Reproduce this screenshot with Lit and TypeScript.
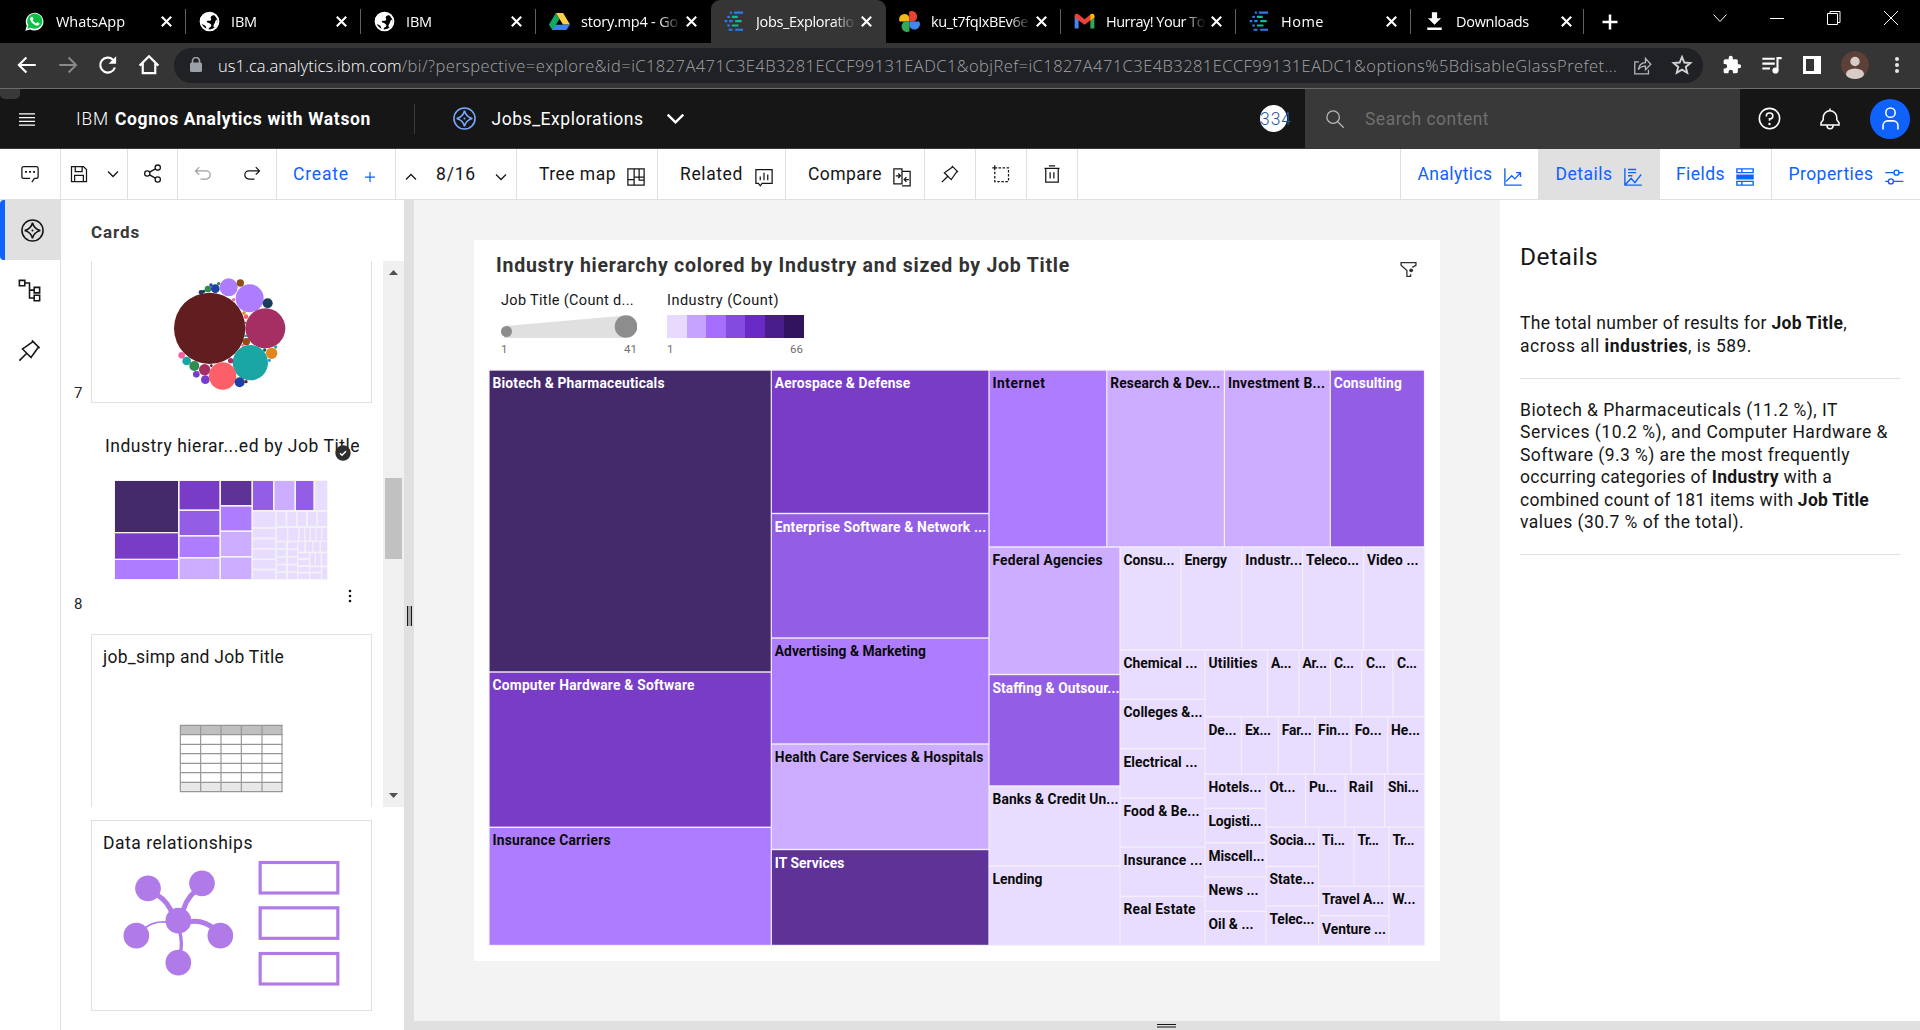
import { LitElement, html, svg, css } from "lit";
import { customElement, property } from "lit/decorators.js";

/** Inline text whose tracking is adjusted so that it spans a given width. */
@customElement("fit-text")
class FitText extends LitElement {
  @property({ type: Number }) w = 0;
  static styles = css`
    :host { display: inline-block; white-space: pre; flex: none; }
  `;
  firstUpdated() {
    const natural = this.getBoundingClientRect().width;
    const count = (this.textContent || "").length;
    if (this.w && count) this.style.letterSpacing = `${(this.w - natural) / count}px`;
  }
  render() { return html`<slot></slot>`; }
}

type Tile = [number, number, number, number, number, string, number, number?];
const SHADES = ["#e8ddff", "#ccadff", "#ae7dff", "#935ee5", "#783cc6", "#5f3298", "#452a6b"];
// x0, y0, x1, y1, shade, label, label width, label x
const TILES: Tile[] = [
  [489, 370, 771.3, 672, 6, "Biotech & Pharmaceuticals", 172],
  [489, 672, 771.3, 827.3, 4, "Computer Hardware & Software", 202],
  [489, 827.3, 771.3, 945.5, 2, "Insurance Carriers", 118],
  [771.3, 370, 989, 513.5, 4, "Aerospace & Defense", 135.5],
  [771.3, 513.5, 989, 638, 3, "Enterprise Software & Network ...", 211.5],
  [771.3, 638, 989, 744, 2, "Advertising & Marketing", 151],
  [771.3, 744, 989, 849.5, 1, "Health Care Services & Hospitals", 208.5],
  [771.3, 849.5, 989, 945.5, 5, "IT Services", 69.5],
  [989, 370, 1106.8, 547, 2, "Internet", 52.5],
  [1106.8, 370, 1224.4, 547, 1, "Research & Dev...", 110],
  [1224.4, 370, 1330.3, 547, 1, "Investment B...", 97],
  [1330.3, 370, 1424.5, 547, 3, "Consulting", 68],
  [989, 547, 1120, 674.5, 1, "Federal Agencies", 110],
  [989, 674.5, 1120, 786, 3, "Staffing & Outsour...", 127],
  [989, 786, 1120, 866, 0, "Banks & Credit Un...", 126],
  [989, 866, 1120, 945.5, 0, "Lending", 50],
  [1120, 547, 1181, 650, 0, "Consu...", 51],
  [1181, 547, 1241.8, 650, 0, "Energy", 42.5],
  [1241.8, 547, 1302.6, 650, 0, "Industr...", 57],
  [1302.6, 547, 1363.5, 650, 0, "Teleco...", 53],
  [1363.5, 547, 1424.5, 650, 0, "Video ...", 51.5],
  [1120, 650, 1205, 699.3, 0, "Chemical ...", 74],
  [1120, 699.3, 1205, 748.6, 0, "Colleges &...", 79],
  [1120, 748.6, 1205, 798, 0, "Electrical ...", 74],
  [1120, 798, 1205, 847, 0, "Food & Be...", 76],
  [1120, 847, 1205, 896.3, 0, "Insurance ...", 79],
  [1120, 896.3, 1205, 945.5, 0, "Real Estate", 72],
  [1205, 650, 1267.5, 716.7, 0, "Utilities", 49],
  [1267.5, 650, 1299, 716.7, 0, "A...", 20.5],
  [1299, 650, 1330.4, 716.7, 0, "Ar...", 24.5],
  [1330.4, 650, 1361.6, 716.7, 0, "C...", 20],
  [1361.6, 650, 1392.8, 716.7, 0, "C...", 20, 1366],
  [1392.8, 650, 1424.5, 716.7, 0, "C...", 20, 1397],
  [1205, 716.7, 1241.5, 774, 0, "De...", 28],
  [1241.5, 716.7, 1278.3, 774, 0, "Ex...", 26],
  [1278.3, 716.7, 1314.6, 774, 0, "Far...", 30],
  [1314.6, 716.7, 1351.2, 774, 0, "Fin...", 31],
  [1351.2, 716.7, 1387.6, 774, 0, "Fo...", 27],
  [1387.6, 716.7, 1424.5, 774, 0, "He...", 29],
  [1205, 774, 1266, 808.4, 0, "Hotels...", 53],
  [1205, 808.4, 1266, 842.6, 0, "Logisti...", 53],
  [1205, 842.6, 1266, 877, 0, "Miscell...", 56],
  [1205, 877, 1266, 911.3, 0, "News ...", 50],
  [1205, 911.3, 1266, 945.5, 0, "Oil & ...", 45],
  [1266, 774, 1305.6, 827, 0, "Ot...", 26],
  [1305.6, 774, 1345.2, 827, 0, "Pu...", 28],
  [1345.2, 774, 1384.6, 827, 0, "Rail", 24.5],
  [1384.6, 774, 1424.5, 827, 0, "Shi...", 31],
  [1266, 827, 1318.6, 866.4, 0, "Socia...", 46],
  [1266, 866.4, 1318.6, 906, 0, "State...", 45],
  [1266, 906, 1318.6, 945.5, 0, "Telec...", 45],
  [1318.6, 827, 1354, 886.3, 0, "Ti...", 23],
  [1354, 827, 1389, 886.3, 0, "Tr...", 21.5],
  [1389, 827, 1424.5, 886.3, 0, "Tr...", 22],
  [1318.6, 886.3, 1389, 915.7, 0, "Travel A...", 62],
  [1318.6, 915.7, 1389, 945.5, 0, "Venture ...", 64],
  [1389, 886.3, 1424.5, 945.5, 0, "W...", 23],
];

// x0, y0, x1, y1, shade
const MINI: number[][] = [
  [345, 843, 534, 996, 6], [345, 1000, 534, 1076, 4], [345, 1080, 534, 1137, 2],
  [539, 843, 658, 928, 4], [539, 933, 658, 1005, 3], [539, 1010, 658, 1071, 2], [539, 1076, 658, 1137, 1],
  [663, 843, 754, 915, 5], [663, 920, 754, 991, 2], [663, 996, 754, 1068, 1], [663, 1073, 754, 1137, 1],
  [759, 843, 819, 930, 3], [824, 843, 883, 930, 1], [888, 843, 940, 930, 3], [946, 843, 981, 930, 0],
  [759, 935, 826, 981, 0], [759, 987, 826, 1013, 0], [759, 1018, 826, 1044, 0], [759, 1049, 826, 1075, 0],
  [759, 1080, 826, 1106, 0], [759, 1111, 826, 1137, 0],
  [831, 936, 857, 978, 0], [862, 936, 888, 978, 0], [893, 936, 918, 978, 0], [924, 936, 949, 978, 0], [954, 936, 981, 978, 0],
  [831, 984, 861, 1022, 0], [865, 984, 894, 1022, 0], [899, 984, 912, 1022, 0], [916, 984, 929, 1022, 0],
  [933, 984, 946, 1022, 0], [950, 984, 963, 1022, 0], [967, 984, 981, 1022, 0],
  ...[1027, 1050, 1073, 1096, 1119].flatMap((y) => [[831, y, 858, y + 18, 0], [864, y, 891, y + 18, 0]]),
  [895, 1026, 913, 1055, 0], [918, 1026, 936, 1055, 0], [940, 1026, 958, 1055, 0], [963, 1026, 981, 1055, 0],
  [895, 1060, 927, 1074, 0], [895, 1080, 927, 1095, 0], [895, 1101, 927, 1115, 0], [895, 1121, 927, 1137, 0],
  [931, 1060, 944, 1096, 0], [948, 1060, 962, 1096, 0], [967, 1060, 981, 1096, 0],
  [931, 1102, 963, 1115, 0], [931, 1121, 963, 1137, 0], [967, 1102, 981, 1137, 0],
];

const BUBBLES: [number, number, number, string][] = [
  [605, 279, 7, "#1b3d5c"], [613, 276, 5, "#1b3d5c"], [626, 269, 10, "#2f8c4d"], [635, 257, 5, "#1c40a5"],
  [648, 268, 13, "#1c40a5"], [658, 253, 5, "#2f8c4d"], [688, 264, 27, "#ae7dff"], [723, 251, 11, "#8f4d15"],
  [703, 301, 5, "#f363a0"], [751, 297, 42, "#ae7dff"], [805, 312, 15, "#1b3d5c"], [734, 341, 5, "#e0861d"],
  [740, 352, 7, "#fc5f68"], [739, 410, 4, "#1aa7a3"], [741, 427, 11, "#8f4d15"], [730, 438, 4, "#f363a0"],
  [738, 370, 3, "#8f4d15"], [631, 387, 107, "#611d20"], [798, 387, 60, "#a52e62"], [829, 443, 5, "#1aa7a3"],
  [796, 452, 5, "#0a5f5a"], [810, 483, 5, "#2a9bf0"], [817, 462, 17, "#e0861d"], [753, 490, 53, "#1aa7a3"],
  [694, 484, 8, "#a52e62"], [547, 468, 10, "#f363a0"], [562, 485, 13, "#1aa7a3"], [585, 500, 15, "#2f8c4d"],
  [616, 511, 17, "#a52e62"], [591, 525, 10, "#773ccb"], [618, 541, 13, "#773ccb"], [636, 499, 4, "#611d20"],
  [670, 530, 41, "#fc5f68"], [721, 549, 15, "#1c40a5"], [740, 547, 5, "#611d20"],
];

const RAMP = ["#e8daff", "#c6a3ff", "#a56eff", "#854adf", "#6929c4", "#491d8b", "#31135e"];

/** 32-unit stroked icon. */
const ic = (size: number, body: unknown, sw = 2, cls = "") => html`<svg class="ic ${cls}" width=${size} height=${size}
  viewBox="0 0 32 32" fill="none" stroke="currentColor" stroke-width=${sw}>${body}</svg>`;

const I = {
  whatsapp: svg`<path d="M2 30l2.200-7.500A13.500 13.500 0 1 1 9.500 28z" fill="#fff" stroke="none"/><path d="M5 27l1.500-5.400A11.600 11.600 0 1 1 10.600 25.600z" fill="#0bc144" stroke="none"/><path d="M11 9c1.200-.8 2-.4 2.400.6l.9 2.300c.2.700-1.200 1.900-1 2.300 1.200 2.300 2.800 3.700 5 4.600.6.200 1.600-1.800 2.300-1.600l2.700 1.300c.8.500-.1 2.800-1.400 3.400-3.300 1.700-12.600-3.600-12.600-10 0-1.200.7-2.300 1.700-2.900z" fill="#fff" stroke="none"/>`,
  globe: svg`<circle cx="16" cy="16" r="13.500" fill="#000" stroke="#fff" stroke-width="3"/><path d="M6 6c5-5 14-5 19 0-3 0-6 1-7 3s2 3 0 5-5 0-6 2 4 2 6 4 0 4-2 5-1 4-2 5c-4-1-2-6-5-8s-6-2-7-6 1-8 4-10z" fill="#fff" stroke="none"/><path d="M27 13c2 3 1 9-2 12-3 0-4-3-2-5s1-5 4-7z" fill="#fff" stroke="none"/>`,
  drive: svg`<g stroke="none"><path d="M10.500 3h11L32 20.500H21z" fill="#ffcf48"/><path d="M0 20.500L5.500 29h21L32 20.500z" fill="#3b82f6"/><path d="M10.500 3L16 12.500 5.500 29 0 20.500z" fill="#11a861"/><path d="M16 12.500l5 8H11z" fill="#000"/></g>`,
  cognos: svg`<g stroke-width="3.200"><path d="M9 2.500h3M15 2.500h14M7 28.500h6M17 28.500h12" stroke="#2f7bf0"/><path d="M5 9h4" stroke="#2f7bf0"/><path d="M12 9h9M17 15.500h10M12 22h10" stroke="#12b89a"/><path d="M1 15.500h4M8 15.500h5M5 22h4" stroke="#2f7bf0"/></g>`,
  photos: svg`<g stroke="none"><path d="M15.500 16H1A7.500 7.500 0 0 1 15.500 9z" fill="#f6b913"/><path d="M15.500 1v15H23a7.500 7.500 0 0 0-7.500-15z" fill="#ea4335"/><path d="M31 16H16v7.500A7.500 7.500 0 0 0 31 16z" fill="#4285f4"/><path d="M16 31V16H8.500A7.500 7.500 0 0 0 16 31z" fill="#34a853"/></g>`,
  gmail: svg`<g stroke="none"><path d="M1 8v18.500h6V13z" fill="#4285f4"/><path d="M31 8v18.500h-6V13z" fill="#34a853"/><path d="M1 8c0-4 3.500-4.500 6-2.500l9 7 9-7c2.500-2 6-1.500 6 2.500v2L16 21 1 10z" fill="#ea4335"/><path d="M25 5.500c2.500-2 6-1.500 6 2.500v2l-6 4.500z" fill="#fbbc04"/></g>`,
  download: svg`<path d="M12 2h8v9h6L16 21 6 11h6zM5 25h22v4H5z" fill="#fff" stroke="none"/>`,
  x: svg`<path d="M6 6l20 20M26 6L6 26"/>`,
  compass: svg`<circle cx="16" cy="16" r="13.500"/><path d="M16 6c1.500 6 4 8.500 10 10-6 1.500-8.500 4-10 10-1.500-6-4-8.500-10-10 6-1.500 8.500-4 10-10z"/><circle cx="16" cy="16" r="1.300" fill="currentColor" stroke="none"/>`,
  chevD: svg`<path d="M6 11l10 10 10-10"/>`,
  chevU: svg`<path d="M6 21l10-10 10 10"/>`,
  pin: svg`<path d="M3 29l9.500-9.500M19 3l10 10M20.500 4.500L10 12l-3 2 11 11 2-3 7.500-10.500"/>`,
  tree: svg`<path d="M3 3h7v7H3zM22 12h7v7h-7zM22 22h7v7h-7zM10 6.500h6v19h6M16 15.500h6"/>`,
};

const TABS: [unknown, string, number][] = [
  [I.whatsapp, "WhatsApp", 69], [I.globe, "IBM", 26], [I.globe, "IBM", 26], [I.drive, "story.mp4 - Go", 97],
  [I.cognos, "Jobs_Exploratio", 98], [I.photos, "ku_t7fqIxBEv6e", 97], [I.gmail, "Hurray! Your To", 99],
  [I.cognos, "Home", 43], [I.download, "Downloads", 73],
];

@customElement("app-root")
class AppRoot extends LitElement {
  static styles = css`
    :host { display: flex; flex-direction: column; width: 1920px; height: 1030px; overflow: hidden;
      font-family: Roboto, "Liberation Sans", sans-serif; color: #161616; background: #fff; }
    * { box-sizing: border-box; }
    svg { display: block; flex: none; }
    .ic { overflow: visible; }
    .grow { flex: 1; }

    .tabs { display: flex; height: 43px; background: #000; color: #fff; padding-left: 11px; flex: none;
      font: 400 14.500px "Open Sans", sans-serif; }
    .tab { width: 175px; flex: none; display: flex; align-items: center; padding: 0 0 1px 13px; position: relative; }
    .tab.last { width: 173px; }
    .tab::after { content: ""; position: absolute; right: 0; top: 9px; height: 25px; width: 1px; background: #5f6062; }
    .tab.on { background: #353535; border-radius: 9px 9px 0 0; }
    .tab.on::after, .tab.nosep::after { display: none; }
    .ttl { width: 100px; margin-left: 11px; flex: none; display: flex;
      -webkit-mask-image: linear-gradient(90deg, #000 78px, transparent 100px); }
    .tab .close { margin-left: 3px; }
    .newtab { margin: 14px 0 0 18px; }
    .win { display: flex; gap: 41px; margin: 10px 21px 0 0; }

    .nav { display: flex; align-items: center; height: 46px; background: #353535; border-bottom: 1px solid #6b6b6b;
      color: #fff; flex: none; padding: 0 14px 1px 17px; }
    .nav > .btn { margin-right: 20.500px; }
    .dim { color: #8a8a8a; }
    .omni { width: 1529px; height: 35px; border-radius: 18px; background: #202124; display: flex; align-items: center;
      margin-left: -5px; padding-left: 13px; font: 300 16.500px "Open Sans", sans-serif; color: #a2a5a9; flex: none; }
    .host { color: #fff; margin-left: 13px; }
    .omni .share { margin-left: 15px; color: #b5b7ba; }
    .omni .star { margin-left: 20px; color: #d0d2d4; }
    .exts { display: flex; align-items: center; gap: 19px; margin-left: 19px; }

    .hdr { display: flex; align-items: center; height: 60px; background: #161616; color: #fff; flex: none;
      border-bottom: 1px solid #393939; font-size: 17.500px; position: relative; }
    .hdr::before { content: ""; position: absolute; left: 0; top: 0; width: 20px; height: 10px; background: #393939; border-radius: 0 0 5px 5px; }
    .burger { margin: 1px 0 0 19px; }
    .ibm { margin-left: 41px; font-weight: 300; }
    .brand { margin-left: 6px; font-weight: 700; }
    .rule { width: 1px; height: 30px; background: #393939; margin-left: 43px; }
    .hdr .cmp { margin-left: 37px; color: #78a9ff; }
    .doc { margin-left: 14.500px; }
    .hdr .dchev { margin-left: 19px; }
    .count { width: 27px; height: 27px; border-radius: 50%; background: #fff; color: #1f57a4; display: flex; align-items: center;
      font-size: 17.500px; font-weight: 300; margin-right: 18px; }
    .search { width: 435px; height: 59px; background: #393939; display: flex; align-items: center; color: #6f6f6f; padding: 1px 0 0 20px; }
    .search .mag { color: #b8b8b8; margin-right: 20px; }
    .help { margin-left: 17px; }
    .bell { margin-left: 36px; }
    .me { width: 40px; height: 40px; border-radius: 50%; background: #0f62fe; margin: 0 10px 0 28px; display: grid; place-items: center; }

    .bar { display: flex; height: 51px; border-bottom: 1px solid #e0e0e0; flex: none; font-size: 17.500px; background: #fff; }
    .cell { display: flex; align-items: center; border-right: 1px solid #e0e0e0; padding-bottom: 1px; flex: none; }
    .bar .low { margin-top: 6px; }
    .c1 { width: 61px; padding-left: 20px; }
    .c2 { width: 67px; padding-left: 8px; gap: 15.500px; }
    .c3 { width: 50px; padding-left: 14px; }
    .c4 { width: 99px; padding-left: 15px; gap: 28.500px; }
    .undo { color: #a0a0a0; }
    .c5 { width: 119px; padding-left: 16px; color: #0f62fe; gap: 12.500px; }
    .c6 { width: 121px; padding-left: 7px; gap: 17px; }
    .c7 { width: 141px; padding-left: 22px; gap: 9.500px; }
    .c8 { width: 128px; padding-left: 22px; gap: 10.500px; }
    .c9 { width: 139px; padding-left: 22px; gap: 10px; }
    .c10 { width: 51px; padding-left: 15px; }
    .r1, .r2, .r3, .r4 { color: #0f62fe; gap: 10px; }
    .r1 { width: 138px; padding-left: 16.500px; border-left: 1px solid #e0e0e0; border-right: 0; }
    .r2 { width: 122px; padding-left: 17.500px; background: #e0e0e0; border: 0; }
    .r3 { width: 112px; padding-left: 16px; }
    .r4 { width: 148px; padding-left: 16.500px; border: 0; }

    .body { display: flex; flex: 1; min-height: 0; }
    .rail { width: 61px; border-right: 1px solid #e0e0e0; display: flex; flex-direction: column; flex: none; }
    .rail div { height: 60px; display: flex; align-items: center; padding-left: 17px; }
    .rail .sel { background: #e0e0e0; border-left: 5px solid #0f62fe; padding-left: 15px; border-radius: 4px 0 0 4px; }
    .cards { width: 343px; flex: none; display: flex; flex-direction: column; }
    .cards h2 { margin: 0; height: 61px; padding: 21px 0 0 30px; font-size: 17px; line-height: 22px; font-weight: 700; color: #393939; }
    .list { display: flex; height: 546px; }
    .stack { width: 322px; overflow: hidden; display: flex; flex-direction: column; }
    .row { display: flex; flex: none; }
    .num { width: 30px; padding: 0 0 1px 13px; font-size: 15px; line-height: 18px; align-self: flex-end; color: #262626; }
    .num.up { padding-bottom: 21.500px; }
    .card { width: 281px; border: 1px solid #e0e0e0; background: #fff; }
    .k7 { height: 142px; border-top: 0; padding: 15.200px 0 0 74.300px; }
    .k8 { height: 231px; border-color: transparent; font-size: 17.500px; position: relative; }
    .k8 .t { padding: 31px 0 0 13px; line-height: 22px; }
    .check { position: absolute; left: 242.500px; top: 41px; }
    .mini { margin: 23px 0 0 22px; }
    .dots { margin: 8.500px 0 0 256px; }
    .k9 { height: 192px; }
    .t9 { font-size: 17.500px; line-height: 22px; padding: 11px 0 0 11px; }
    .tbl { margin: 56px 0 0 87.300px; }
    .sb { width: 21px; background: #f0f0f0; display: flex; flex-direction: column; align-items: center; padding: 9px 0 9px 0; }
    .thumb { width: 17px; height: 81px; background: #c1c1c1; margin-top: 203px; }
    .rel { margin: 12.500px 0 0 30px; height: 191px; }
    .rels { margin: 4.800px 0 0 28px; }
    .split { width: 10px; background: #e0e0e0; flex: none; display: flex; justify-content: center; padding-top: 406px; }
    .split i { width: 5px; height: 20px; border: solid #161616; border-width: 0 1.500px; background: #aaa; }
    .right { flex: 1; display: flex; flex-direction: column; }
    .cols { display: flex; flex: 1; }
    .canvas { width: 1086px; background: #f3f3f3; padding: 40px 0 0 60px; }
    .viz { width: 966px; height: 721px; background: #fff; display: flex; flex-direction: column; }
    .vh { display: flex; justify-content: space-between; height: 48px; padding: 15px 23.500px 0 22px; font-size: 19.500px; line-height: 22px; font-weight: 700; color: #323232; }
    .vh svg { margin-top: 6px; }
    .lg { display: flex; height: 81px; padding-left: 27px; gap: 33px; font-size: 14.500px; line-height: 16px; }
    .lg > div { width: 133px; padding-top: 5px; }
    .lg .sz { width: 136px; height: 23px; margin-top: 6px; }
    .lg .ramp { display: flex; width: 137px; height: 23px; margin-top: 6px; }
    .lg .ramp svg { width: 137px; }
    .lg .ends { display: flex; justify-content: space-between; width: 136px; font-size: 11.500px; line-height: 13px; color: #6f6f6f; margin-top: 5px; }
    .tm { margin-left: 13.500px; }
    .tm text { font: 700 13.800px Roboto, "Liberation Sans", sans-serif; }
    .det { width: 420px; background: #fff; padding: 42px 20px 0 20px; font-size: 17.500px; }
    .det h1 { margin: 0 0 40px; font-weight: 400; font-size: 24.500px; line-height: 30px; }
    .det .p { display: flex; flex-direction: column; border-bottom: 1px solid #e0e0e0; padding-bottom: 20.500px; margin-bottom: 20px; }
    .ln { height: 22.500px; line-height: 22.500px; }
    .foot { height: 9px; background: #e0e0e0; display: flex; justify-content: center; padding: 3px 1px 0 0; flex: none; }
    .foot i { width: 19px; height: 4px; border-top: 1px solid #161616; border-bottom: 2px solid #777; }
  `;

  tabStrip() {
    const kind = (i: number) => (i === 4 ? "on" : i === 3 ? "nosep" : i === 8 ? "last" : "");
    return html`<div class="tabs">
      ${TABS.map(([icon, t, w], i) => html`<div class="tab ${kind(i)}">
        ${ic(21, icon)}<span class="ttl"><fit-text w=${w}>${t}</fit-text></span>${ic(15, I.x, 4.500, "close")}</div>`)}
      ${ic(16, svg`<path d="M16 1v30M1 16h30"/>`, 5, "newtab")}
      <span class="grow"></span>
      <div class="win">
        ${ic(16, svg`<path d="M3 9l13 14L29 9"/>`, 2)}
        ${ic(16, svg`<path d="M2 17h28"/>`, 2)}
        ${ic(16, svg`<path d="M3 7h20v22H3zM8 7V3h20v22h-5"/>`, 2)}
        ${ic(16, svg`<path d="M2 2l28 28M30 2L2 30"/>`, 2)}
      </div></div>`;
  }

  navBar() {
    return html`<div class="nav">
      ${ic(20, svg`<path d="M30 16H4M15 4L3 16l12 12"/>`, 3.500, "btn")}
      ${ic(20, svg`<path d="M2 16h26M17 4l12 12-12 12"/>`, 3, "btn dim")}
      ${ic(20, svg`<path d="M27 20A12 12 0 1 1 24 7.500l3 3.500"/><path d="M29 2v12H17z" fill="currentColor" stroke="none"/>`, 3.500, "btn")}
      ${ic(20, svg`<path d="M1 17L16 2l15 15M6 13v16h20V13"/>`, 3.500, "btn")}
      <div class="omni">
        <svg width="18" height="16" viewBox="0 0 18 16"><rect x="3" y="5.500" width="12" height="9.500" rx="1.500" fill="#9aa0a6"/><path d="M5.500 6V4a3.500 3.500 0 0 1 7 0v2" fill="none" stroke="#9aa0a6" stroke-width="1.700"/></svg>
        <fit-text class="host" w="183.5">us1.ca.analytics.ibm.com</fit-text><fit-text w="1216">/bi/?perspective=explore&id=iC1827A471C3E4B3281ECCF99131EADC1&objRef=iC1827A471C3E4B3281ECCF99131EADC1&options%5BdisableGlassPrefet...</fit-text>
        ${ic(19, svg`<path d="M10 10H3v20h23v-7M9 23c1-8 6-12 12-12V4l9 10-9 9v-6c-5 0-9 1-12 6z"/>`, 2.200, "share")}
        ${ic(20, svg`<path d="M16 3l3.700 9 9.800.8-7.500 6.300 2.400 9.500L16 23.500l-8.400 5.100L10 19.100 2.500 12.800l9.800-.8z"/>`, 3, "star")}
      </div>
      <div class="exts">
        <svg width="20" height="20" viewBox="0 0 24 24" fill="#fff"><path d="M20.500 11H19V7c0-1.100-.9-2-2-2h-4V3.500a2.500 2.500 0 0 0-5 0V5H4a2 2 0 0 0-2 2v3.800h1.500a2.700 2.700 0 0 1 0 5.400H2V20c0 1.100.9 2 2 2h3.800v-1.500a2.700 2.700 0 0 1 5.400 0V22H17a2 2 0 0 0 2-2v-4h1.500a2.500 2.500 0 0 0 0-5z"/></svg>
        ${ic(22, svg`<path d="M2 7h18M2 14h18M2 21h11M24 24V6h6"/><circle cx="21" cy="24" r="4.500" fill="currentColor" stroke="none"/>`, 3)}
        <svg width="20" height="18" viewBox="0 0 20 18"><path d="M1 0h18v18H1zM4 3v12h8V3z" fill="#fff" fill-rule="evenodd"/></svg>
        <svg width="28" height="28" viewBox="0 0 28 28"><defs><clipPath id="av"><circle cx="14" cy="14" r="14"/></clipPath></defs><g clip-path="url(#av)"><circle cx="14" cy="14" r="14" fill="#5d4037"/><circle cx="14" cy="10.500" r="4.700" fill="#d7ccc8"/><ellipse cx="14" cy="23" rx="9" ry="5.500" fill="#d7ccc8"/></g></svg>
        <svg width="20" height="18" viewBox="0 0 20 18" fill="#e8e8e8"><circle cx="9" cy="3" r="2"/><circle cx="9" cy="9" r="2"/><circle cx="9" cy="15" r="2"/></svg>
      </div></div>`;
  }

  header() {
    return html`<div class="hdr">
      <svg class="burger" width="16" height="13" viewBox="0 0 16 13"><path d="M0 .8h16M0 4.600h16M0 8.400h16M0 12.200h16" stroke="#fff" stroke-width="1.200"/></svg>
      <fit-text class="ibm" w="33">IBM</fit-text><fit-text class="brand" w="256">Cognos Analytics with Watson</fit-text>
      <span class="rule"></span>
      ${ic(25, I.compass, 2, "cmp")}
      <fit-text class="doc" w="152">Jobs_Explorations</fit-text>
      ${ic(25, I.chevD, 3, "dchev")}
      <span class="grow"></span>
      <span class="count"><fit-text w="32">334</fit-text></span>
      <div class="search">${ic(20, svg`<circle cx="13" cy="13" r="10"/><path d="M20 20l10 10"/>`, 2, "mag")}<fit-text w="124">Search content</fit-text></div>
      ${ic(25, svg`<circle cx="16" cy="16" r="13"/><path d="M12 13.500v-1a3.500 3.500 0 0 1 3.500-3.500h1a3.500 3.500 0 0 1 0 7.500H16V19"/><circle cx="16" cy="23" r="1.500" fill="currentColor" stroke="none"/>`, 2, "help")}
      ${ic(24, svg`<path d="M16 2v3M4 24v-3l3-4v-3a9 9 0 0 1 18 0v3l3 4v3zM12 24v1a4 4 0 0 0 8 0v-1"/>`, 2, "bell")}
      <div class="me">${ic(25, svg`<circle cx="16" cy="8.500" r="6"/><path d="M6.500 30v-5a6 6 0 0 1 6-6h7a6 6 0 0 1 6 6v5"/>`, 2)}</div>
    </div>`;
  }

  toolbar() {
    return html`<div class="bar">
      <div class="cell c1">${ic(20, svg`<path d="M19 29l4-6h3a3 3 0 0 0 3-3V7a3 3 0 0 0-3-3H6a3 3 0 0 0-3 3v13a3 3 0 0 0 3 3h10"/><path d="M8 12.500h3M14.500 12.500h3M21 12.500h3" stroke-width="3"/>`)}</div>
      <div class="cell c2">${ic(20, svg`<path d="M4 4h19l5 5v19H4zM10 4v8h11V4M9 28V18h14v10"/>`)}${ic(16, I.chevD, 2.500)}</div>
      <div class="cell c3">${ic(21, svg`<circle cx="24" cy="7" r="4"/><circle cx="8" cy="16" r="4"/><circle cx="24" cy="25" r="4"/><path d="M11.500 14l9-5M11.500 18l9 5"/>`)}</div>
      <div class="cell c4">${ic(20, svg`<path d="M12 24h9a6 6 0 0 0 0-13H5M10 5l-6 6 6 6"/>`, 2, "undo")}${ic(20, svg`<path d="M20 24h-9a6 6 0 0 1 0-13h16M22 5l6 6-6 6"/>`)}</div>
      <div class="cell c5"><fit-text w="56">Create</fit-text>${ic(16, svg`<path d="M16 6v20M6 16h20"/>`, 2.500, "low")}</div>
      <div class="cell c6">${ic(16, I.chevU, 2.500, "low")}<fit-text w="40">8/16</fit-text>${ic(16, I.chevD, 2.500, "low")}</div>
      <div class="cell c7"><fit-text w="77">Tree map</fit-text>${ic(20, svg`<path d="M3 3h26v26H3zM13 3v26M3 20h10M13 16h16M21 3v13M21 16v5h8"/>`, 2, "low")}</div>
      <div class="cell c8"><fit-text w="63">Related</fit-text>${ic(20, svg`<path d="M3 4h26v22H13l-3 4-3-4H3zM10 21v-6M16 21V9M22 21V12"/>`, 2, "low")}</div>
      <div class="cell c9"><fit-text w="74">Compare</fit-text>${ic(20, svg`<path d="M16 27H3V3h13zM16 7h13v23H16M6 14h6M10 10.500l3.500 3.500-3.500 3.500M27 20h-6M23 16.500L19.500 20l3.500 3.500"/>`, 2, "low")}</div>
      <div class="cell c10">${ic(20, I.pin)}</div>
      <div class="cell c10">${ic(20, svg`<path d="M6 2v8M2 6h8"/><path d="M12 6h16v22H6V12" stroke-dasharray="4 2.500"/>`)}</div>
      <div class="cell c10">${ic(20, svg`<path d="M4 7h24M11 3h10M6 7v22h20V7M13 13v10M19 13v10"/>`)}</div>
      <span class="grow"></span>
      <div class="cell r1"><fit-text w="75">Analytics</fit-text>${ic(20, svg`<path d="M3 2v27h27M5 23l9-9 5 5 9-10M21 9h7v7"/>`, 2.200, "low")}</div>
      <div class="cell r2"><fit-text w="57">Details</fit-text>${ic(20, svg`<path d="M3 2v27h27M4 28l9-10 6 7 10-13M8 4h13M8 9h13M8 14h7"/>`, 2.200, "low")}</div>
      <div class="cell r3"><fit-text w="49">Fields</fit-text>${ic(20, svg`<path d="M3 3h26v6H3zM3 23h26v6H3zM11 3v6M11 23v6"/><path d="M2 12h28v8H2z" fill="currentColor" stroke="none"/>`, 2.200, "low")}</div>
      <div class="cell r4"><fit-text w="85">Properties</fit-text>${ic(20, svg`<path d="M2 9h14M24 9h7M2 23h5M15 23h16"/><circle cx="20" cy="9" r="4"/><circle cx="11" cy="23" r="4"/>`, 2.200, "low")}</div>
    </div>`;
  }

  cards() {
    const xs = [542, 603, 664, 725, 787, 847], ys = [346, 374, 403, 431, 460, 488, 517, 545];
    return html`<div class="cards">
      <h2><fit-text w="49">Cards</fit-text></h2>
      <div class="list">
        <div class="stack">
          <div class="row"><span class="num">7</span><div class="card k7">
            <svg width="126.67" height="116.67" viewBox="500 230 380 350">${BUBBLES.map(([x, y, r, c]) => svg`<circle cx=${x} cy=${y} r=${r} fill=${c}/>`)}</svg>
          </div></div>
          <div class="row"><span class="num up">8</span><div class="card k8">
            <div class="t"><fit-text w="255">Industry hierar...ed by Job Title</fit-text></div>
            <svg class="check" width="16" height="16" viewBox="0 0 16 16"><circle cx="8" cy="8" r="7.700" fill="#2e2e2e"/><path d="M5 8.300l2 2 4-4" fill="none" stroke="#fff" stroke-width="1.500"/></svg>
            <svg class="mini" width="214" height="100" viewBox="342 840 642 300"><rect x="343" y="841" width="640" height="298" fill="#f2f1f4"/>
              ${MINI.map(([a, b, c, d, s]) => svg`<rect x=${a} y=${b} width=${c - a} height=${d - b} fill=${SHADES[s]}/>`)}</svg>
            <svg class="dots" width="4" height="14" viewBox="0 0 4 14" fill="#161616"><circle cx="2" cy="2" r="1.300"/><circle cx="2" cy="7" r="1.300"/><circle cx="2" cy="12" r="1.300"/></svg>
          </div></div>
          <div class="row"><span class="num"></span><div class="card k9">
            <div class="t9"><fit-text w="181">job_simp and Job Title</fit-text></div>
            <svg class="tbl" width="104.67" height="68.67" viewBox="538 342 314 206">
              <rect x="542" y="346" width="305" height="28" fill="#bfbfbf"/><rect x="542" y="517" width="305" height="28" fill="#e8e8e8"/>
              <g stroke="#969696" stroke-width="3.500">${xs.map((x) => svg`<path d="M${x} 345V546"/>`)}${ys.map((y) => svg`<path d="M541 ${y}H849"/>`)}</g></svg>
          </div></div>
        </div>
        <div class="sb">
          <svg width="9" height="5" viewBox="0 0 9 5"><path d="M4.500 0L9 5H0z" fill="#505050"/></svg>
          <div class="thumb"></div><span class="grow"></span>
          <svg width="9" height="5" viewBox="0 0 9 5"><path d="M0 0h9L4.500 5z" fill="#505050"/></svg>
        </div>
      </div>
      <div class="card rel">
        <div class="t9"><fit-text w="150">Data relationships</fit-text></div>
        <svg class="rels" width="223.33" height="130" viewBox="360 745 670 390" fill="none" stroke="#b07be8">
          <path d="M470 855Q505 875 520 920M590 840Q550 875 547 920" stroke-width="15"/>
          <path d="M570 936Q612 930 645 960" stroke-width="15"/><path d="M539 965Q548 1000 541 1030" stroke-width="10"/>
          <path d="M435 955Q465 932 505 938" stroke-width="5"/>
          <g fill="#b07be8" stroke="none">${[[444, 836], [606, 821], [535, 933], [409, 978], [661, 978], [535, 1059]].map(([x, y]) => svg`<circle cx=${x} cy=${y} r="38.500"/>`)}</g>
          ${[758.500, 894.500, 1031.500].map((y) => svg`<rect x="780.500" y=${y} width="233" height="91.500" stroke-width="9.500"/>`)}
        </svg>
      </div>
    </div>`;
  }

  treemap() {
    return html`<svg class="tm" width="938" height="578" viewBox="488 369 938 578">
      <rect x="488.500" y="369.500" width="936.500" height="576.500" fill="#f3f0f8"/>
      ${TILES.map(([a, b, c, d, s, t, w, lx]) => svg`<rect x=${a + 0.6} y=${b + 0.7} width=${c - a - 1.2} height=${d - b - 1.4} fill=${SHADES[s]}/>
        <text x=${lx ?? a + 3.5} y=${b + 18} textLength=${w} fill=${s > 2 ? "#fff" : "#0a0a0a"}>${t}</text>`)}
    </svg>`;
  }

  viz() {
    return html`<div class="canvas"><div class="viz">
      <div class="vh"><fit-text w="574">Industry hierarchy colored by Industry and sized by Job Title</fit-text>
        ${ic(17, svg`<path d="M23 12l7-4V3H2v5l11 10v11h7v-4"/><circle cx="21" cy="17.500" r="3.500" fill="currentColor" stroke="none"/>`, 2.500)}</div>
      <div class="lg">
        <div><fit-text w="133">Job Title (Count d...</fit-text>
          <svg class="sz" viewBox="0 0 136 23"><path d="M4 11L125 0.500V23H3z" fill="#e0e0e0"/><circle cx="5.500" cy="16.500" r="5.500" fill="#8d8d8d"/><circle cx="125" cy="11.500" r="11.300" fill="#8d8d8d"/></svg>
          <div class="ends"><span>1</span><span>41</span></div></div>
        <div><fit-text w="112">Industry (Count)</fit-text>
          <div class="ramp"><svg height="23" viewBox="0 0 137 23">${RAMP.map((c, i) => svg`<rect x=${Math.round(i * 19.57)} width="20" height="23" fill=${c}/>`)}</svg></div>
          <div class="ends"><span>1</span><span>66</span></div></div>
      </div>
      ${this.treemap()}
    </div></div>`;
  }

  details() {
    return html`<div class="det">
      <h1><fit-text w="78">Details</fit-text></h1>
      <div class="p">
        <div class="ln"><fit-text w="327">The total number of results for <b>Job Title</b>,</fit-text></div>
        <div class="ln"><fit-text w="232">across all <b>industries</b>, is 589.</fit-text></div>
      </div>
      <div class="p">
        <div class="ln"><fit-text w="318">Biotech & Pharmaceuticals (11.2 %), IT</fit-text></div>
        <div class="ln"><fit-text w="368">Services (10.2 %), and Computer Hardware &</fit-text></div>
        <div class="ln"><fit-text w="330">Software (9.3 %) are the most frequently</fit-text></div>
        <div class="ln"><fit-text w="312">occurring categories of <b>Industry</b> with a</fit-text></div>
        <div class="ln"><fit-text w="349">combined count of 181 items with <b>Job Title</b></fit-text></div>
        <div class="ln"><fit-text w="224">values (30.7 % of the total).</fit-text></div>
      </div>
    </div>`;
  }

  render() {
    return html`${this.tabStrip()}${this.navBar()}${this.header()}${this.toolbar()}
      <div class="body">
        <div class="rail"><div class="sel">${ic(25, I.compass)}</div><div>${ic(25, I.tree)}</div><div>${ic(25, I.pin)}</div></div>
        ${this.cards()}
        <div class="split"><i></i></div>
        <div class="right"><div class="cols">${this.viz()}${this.details()}</div><div class="foot"><i></i></div></div>
      </div>`;
  }
}
